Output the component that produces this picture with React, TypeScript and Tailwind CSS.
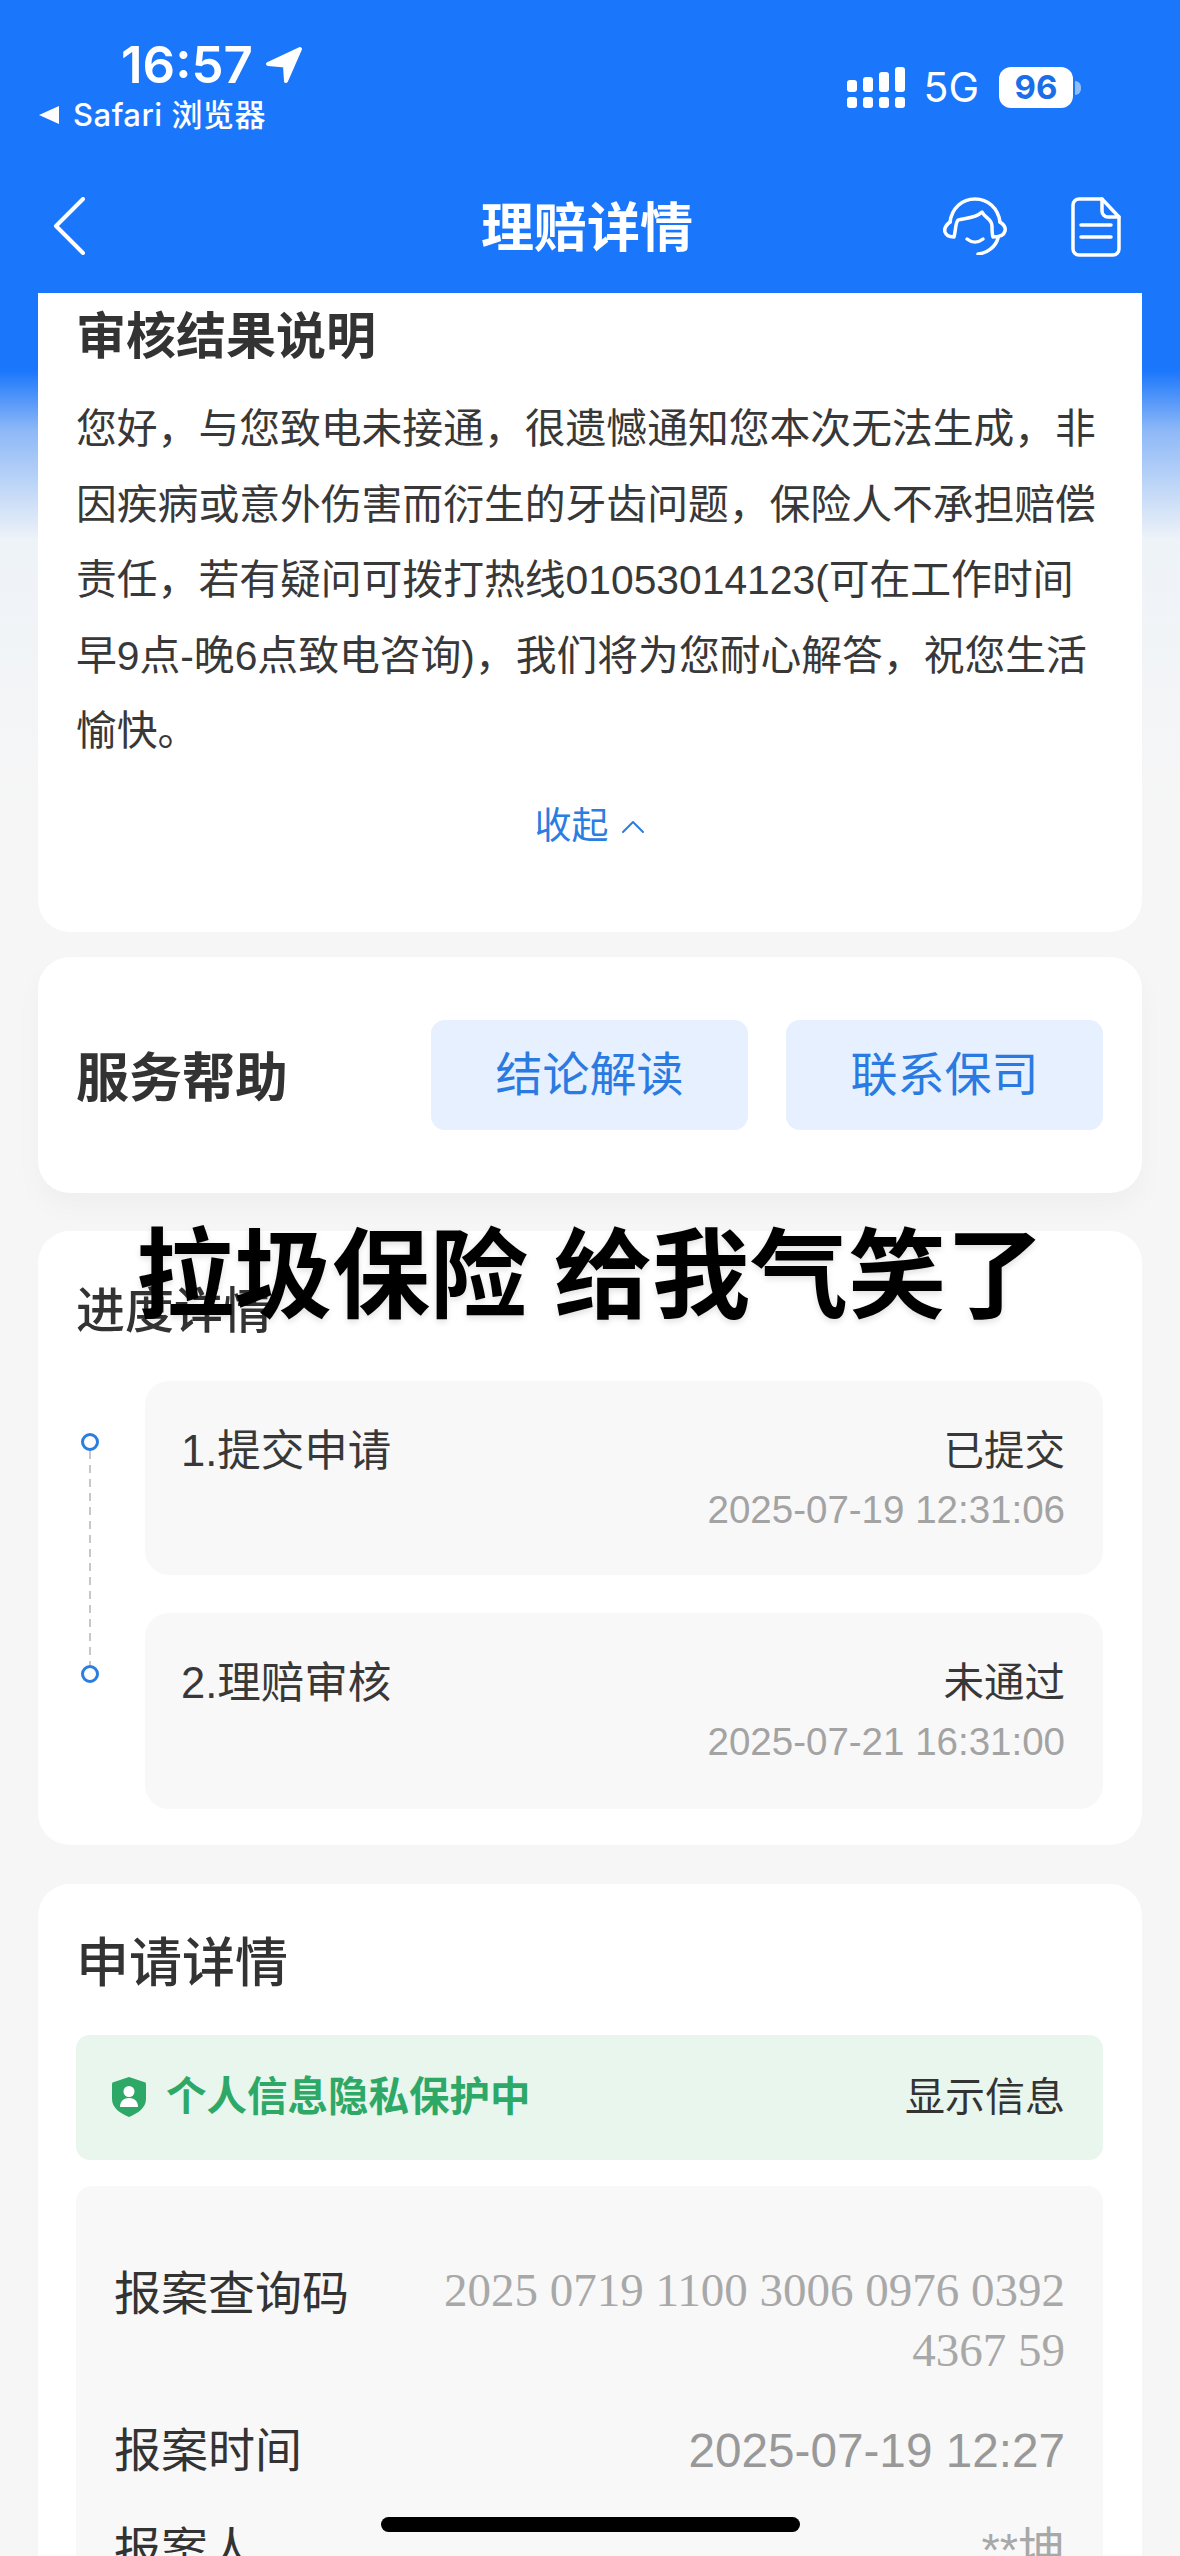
import type { ReactNode } from "react";

function Card({ className, children }: { className?: string; children: ReactNode }) {
  return <section className={`rounded-[32px] bg-white pl-[38px] pr-[39px] ${className ?? ""}`}>{children}</section>;
}

function StatusBar() {
  return (
    <div className="flex h-[140px] items-start justify-between pl-[38px] pr-[99px] pt-[46px] font-['Inter','Noto_Sans_CJK_SC',sans-serif] text-white">
      <div>
        <div className="ml-[83px] flex items-center gap-[12px]">
          <span className="text-[51px] font-semibold leading-[38px]">16:57</span>
          <svg width="38" height="38" viewBox="0 0 38 38" aria-hidden="true">
            <path d="M35 3 3 18l17 1.5L21 35Z" fill="white" stroke="white" strokeWidth="4" strokeLinejoin="round" />
          </svg>
        </div>
        <div className="mt-[12px] flex items-center">
          <svg width="22" height="20" viewBox="0 0 22 20" aria-hidden="true">
            <path d="M21 1v18L1 10Z" fill="white" />
          </svg>
          <span className="ml-[13px] text-[31px] font-medium leading-[38px] tracking-[0.5px]">Safari 浏览器</span>
        </div>
      </div>
      <div className="mt-[21px] flex items-center">
        <Signal />
        <span className="ml-[18px] text-[41px] leading-[41px]">5G</span>
        <div className="ml-[20px] flex h-[41px] w-[74px] items-center justify-center rounded-[12px] bg-white text-[33px] font-bold leading-none text-[#1a6fe8]">
          96
        </div>
        <div className="ml-[2px] h-[14px] w-[6px] rounded-r-full bg-[#8fbdfb]" />
      </div>
    </div>
  );
}

function Signal() {
  const bars = [12, 15, 20, 25];
  return (
    <div className="flex flex-col gap-[5px]">
      <div className="flex h-[25px] items-end gap-[6px]">
        {bars.map((h) => (
          <div key={h} className="w-[10px] rounded-[3px] bg-white" style={{ height: h }} />
        ))}
      </div>
      <div className="flex gap-[6px]">
        {bars.map((h) => (
          <div key={h} className="h-[11px] w-[10px] rounded-[3px] bg-white" />
        ))}
      </div>
    </div>
  );
}

function NavBar() {
  return (
    <div className="grid h-[153px] grid-cols-[1fr_auto_1fr] items-start pl-[53px] pr-[59px] pt-[57px]">
      <svg width="32" height="58" viewBox="0 0 32 58" fill="none" aria-hidden="true">
        <path d="M30 2 3 29l27 27" stroke="white" strokeWidth="4" strokeLinecap="round" strokeLinejoin="round" />
      </svg>
      <h1 className="mt-[2px] text-[53px] font-bold leading-[60px] text-white">理赔详情</h1>
      <div className="flex items-start justify-end gap-[64px]">
        <svg width="64" height="58" viewBox="0 0 64 58" fill="none" stroke="white" strokeWidth="3.5" strokeLinecap="round" strokeLinejoin="round" aria-hidden="true">
          <path d="M7 25C9 11 19 2 32 2s23 9 25 23" />
          <path d="M7 25c-4 3-6 6-5 10 1 3 4 5 9 5 2-7 1-13 4-17 5-2 17-1 24-8 3 6 10 7 10 14 0 4 0 8 1 11 6 0 11-2 12-6 1-4-2-7-5-9" />
          <path d="M24 42c5 4 11 4 16 0" />
          <path d="M55 41c-2 8-10 15-20 16" />
        </svg>
        <svg width="50" height="60" viewBox="0 0 50 60" fill="none" stroke="white" strokeWidth="3.5" strokeLinecap="round" strokeLinejoin="round" aria-hidden="true">
          <path d="M8 2h23l17 18v32a6 6 0 0 1-6 6H8a6 6 0 0 1-6-6V8a6 6 0 0 1 6-6Z" />
          <path d="M31 2v12a6 6 0 0 0 6 6h11" />
          <path d="M10 28h30M10 40h30" />
        </svg>
      </div>
    </div>
  );
}

function ProgressRow({ label, status, time, className }: { label: string; status: string; time: string; className?: string }) {
  return (
    <div className={`rounded-[24px] bg-[#f8f8f8] pl-[36px] pr-[38px] pt-[46px] ${className ?? ""}`}>
      <div className="flex items-center justify-between leading-[48px] text-[#383838]">
        <span className="text-[43.5px]">{label}</span>
        <span className="text-[40.5px]">{status}</span>
      </div>
      <div className="mt-[11px] text-right text-[38.5px] leading-[48px] text-[#a3a3a3]">{time}</div>
    </div>
  );
}

function Dot() {
  return <div className="h-[18px] w-[18px] shrink-0 rounded-full border-[3px] border-[#2a7de1]" />;
}

export default function App() {
  return (
    <div className="relative h-[2556px] w-[1180px] overflow-hidden bg-[linear-gradient(#1a76fb_370px,#8db8f7_430px,#eef3f8_540px,#f6f6f6_800px)] font-['Liberation_Sans','Noto_Sans_CJK_SC',sans-serif]">
      <StatusBar />
      <NavBar />
      <main className="px-[38px]">
        <Card className="rounded-t-none pb-[85px] pt-[19px]">
          <h2 className="text-[50px] font-bold leading-[50px] text-[#333]">审核结果说明</h2>
          <p className="mt-[30px] text-[40.8px] leading-[75.5px] text-[#383838]">
            您好，与您致电未接通，很遗憾通知您本次无法生成，非因疾病或意外伤害而衍生的牙齿问题，保险人不承担赔偿责任，若有疑问可拨打热线01053014123(可在工作时间早9点-晚6点致电咨询)，我们将为您耐心解答，祝您生活愉快。
          </p>
          <div className="mt-[37px] flex h-[40px] items-center justify-center gap-[12px] text-[37px] leading-[40px] text-[#2a7de1]">
            <span>收起</span>
            <svg width="24" height="14" viewBox="0 0 24 14" fill="none" aria-hidden="true">
              <path d="m2 12 10-10 10 10" stroke="#2a7de1" strokeWidth="2" strokeLinecap="round" strokeLinejoin="round" />
            </svg>
          </div>
        </Card>

        <Card className="mt-[25px] flex h-[236px] items-center justify-between shadow-[0_14px_28px_rgba(0,0,0,0.03)]">
          <h2 className="mt-[8px] text-[53px] font-bold leading-[60px] text-[#333]">服务帮助</h2>
          <div className="flex gap-[38px]">
            <button className="h-[110px] w-[317px] rounded-[14px] bg-[#e6f0fe] pt-[2px] text-[47px] text-[#2a7ae2]">结论解读</button>
            <button className="h-[110px] w-[317px] rounded-[14px] bg-[#e6f0fe] pt-[2px] text-[47px] text-[#2a7ae2]">联系保司</button>
          </div>
        </Card>

        <Card className="mt-[38px] pb-[36px] pt-[55px]">
          <h2 className="text-[49px] font-medium leading-[50px] text-[#333]">进度详情</h2>
          <div className="mt-[45px] flex">
            <div className="flex w-[27px] flex-col items-center pt-[52px]">
              <Dot />
              <div className="h-[214px] w-[2px] bg-[repeating-linear-gradient(#c8c8c8_0_8px,transparent_8px_14px)]" />
              <Dot />
            </div>
            <div className="ml-[42px] flex flex-1 flex-col gap-[38px]">
              <ProgressRow className="h-[194px]" label="1.提交申请" status="已提交" time="2025-07-19 12:31:06" />
              <ProgressRow className="h-[196px]" label="2.理赔审核" status="未通过" time="2025-07-21 16:31:00" />
            </div>
          </div>
        </Card>

        <Card className="mt-[39px] pt-[55px]">
          <h2 className="text-[53px] font-medium leading-[50px] text-[#333]">申请详情</h2>
          <div className="mt-[46px] flex h-[125px] items-center justify-between rounded-[14px] bg-[#e8f6ee] pl-[36px] pr-[38px]">
            <div className="flex items-center gap-[20px]">
              <svg width="34" height="40" viewBox="0 0 34 40" aria-hidden="true">
                <path d="M17 0 32 5a2 2 0 0 1 2 2v15c0 9-8 14-17 18C8 36 0 31 0 22V7a2 2 0 0 1 2-2Z" fill="#2ea866" />
                <circle cx="17" cy="14.5" r="5.5" fill="white" />
                <path d="M8 30c0-6 4-9 9-9s9 3 9 9Z" fill="white" />
              </svg>
              <span className="text-[40.5px] font-bold leading-[50px] text-[#2ea866]">个人信息隐私保护中</span>
            </div>
            <span className="text-[40px] leading-[50px] text-[#333]">显示信息</span>
          </div>
          <div className="mt-[26px] rounded-[16px] bg-[#f8f8f8] pb-[60px] pl-[38px] pr-[38px] pt-[74px] text-[47px] leading-[60px]">
            <div className="flex items-start justify-between">
              <span className="mt-[4px] text-[#333]">报案查询码</span>
              <span className="w-[640px] text-right font-['Liberation_Serif',serif] text-[#a8a8a8]">2025 0719 1100 3006 0976 0392 4367 59</span>
            </div>
            <div className="mt-[41px] flex items-center justify-between">
              <span className="text-[#333]">报案时间</span>
              <span className="text-[47.7px] text-[#999]">2025-07-19 12:27</span>
            </div>
            <div className="mt-[39px] flex items-center justify-between">
              <span className="text-[#333]">报案人</span>
              <span className="text-[#a8a8a8]">**坤</span>
            </div>
          </div>
        </Card>
      </main>

      {/* video caption on top of the screen */}
      <div className="absolute inset-x-0 top-[1206px] flex justify-center gap-[26px] text-[98px] font-bold leading-[140px] text-black [text-shadow:0_3px_6px_rgba(0,0,0,0.12)]">
        <span>拉圾保险</span>
        <span>给我气笑了</span>
      </div>

      <div className="absolute left-[381px] top-[2517px] h-[15px] w-[419px] rounded-full bg-black" />
    </div>
  );
}
